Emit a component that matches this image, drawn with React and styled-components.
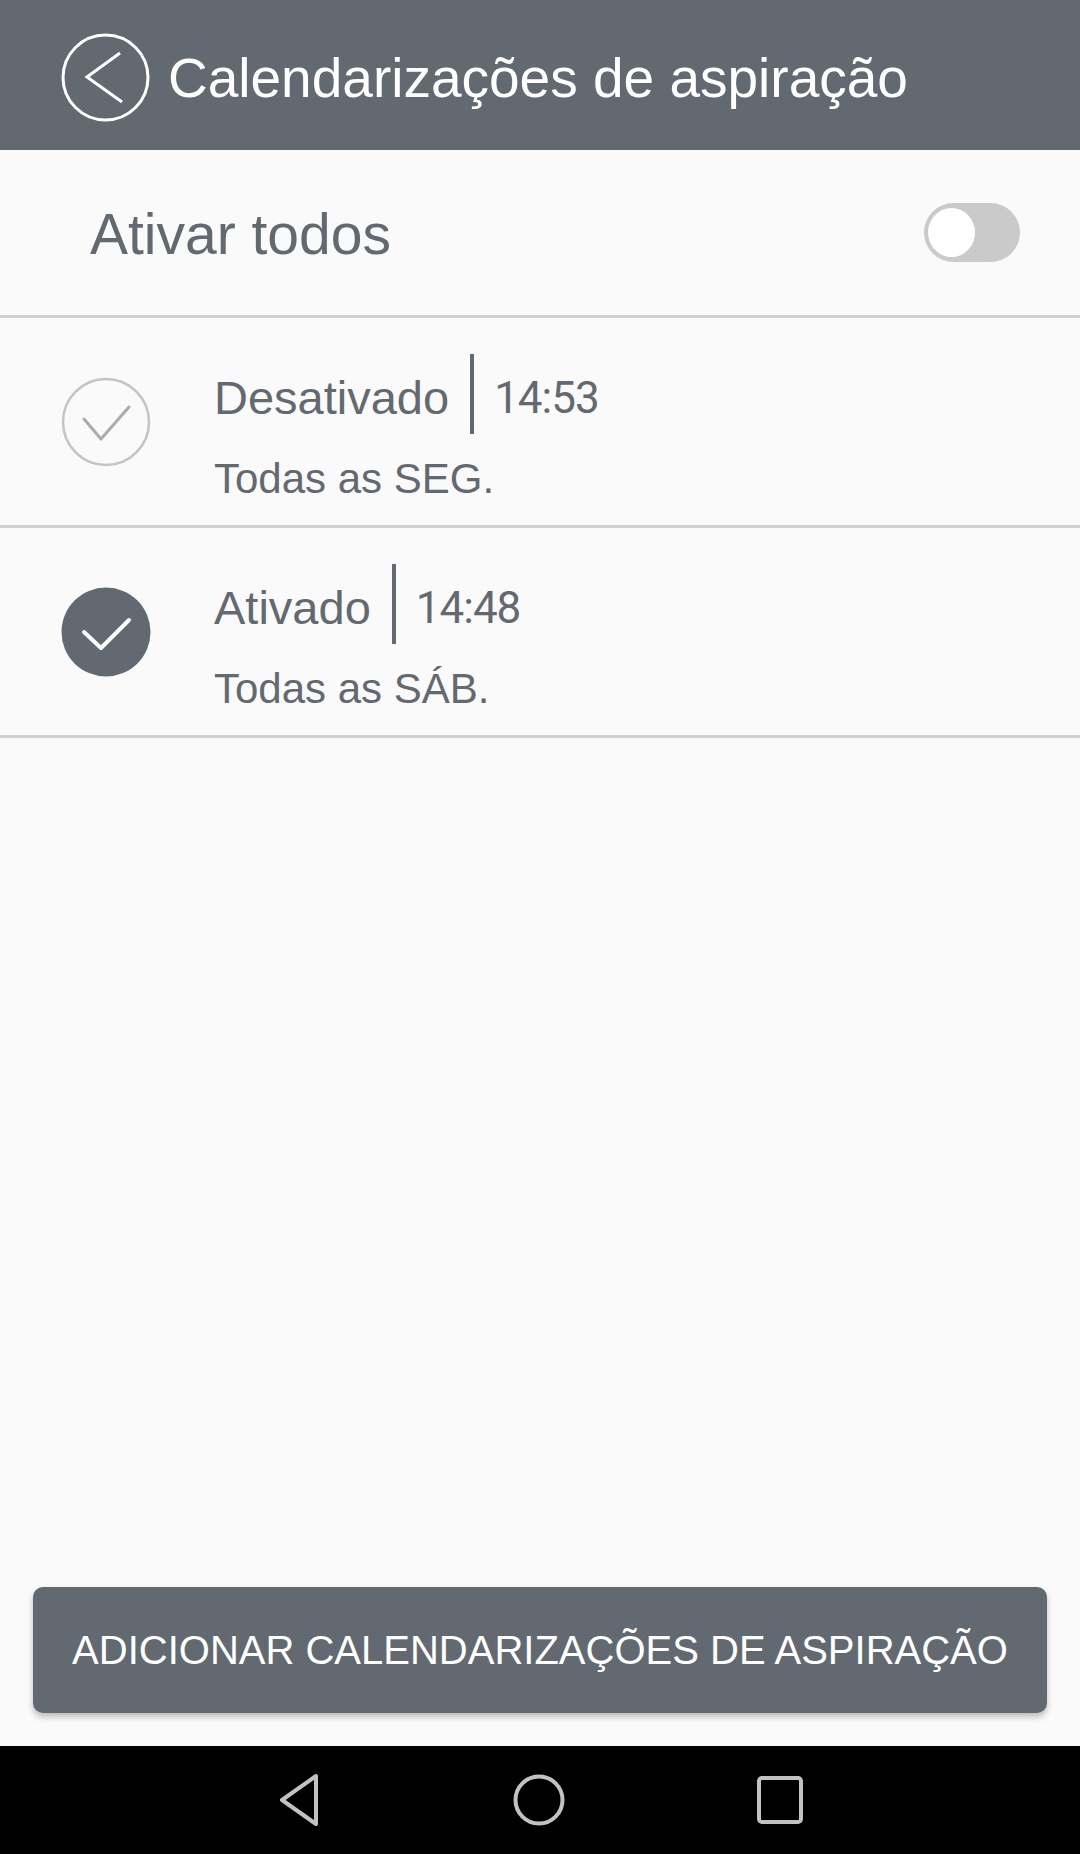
import React, { useState } from "react";
import styled, { createGlobalStyle } from "styled-components";

const GlobalStyle = createGlobalStyle`
  html, body {
    margin: 0;
    padding: 0;
    background: #fafafa;
    font-family: "Liberation Sans", Arial, sans-serif;
  }
`;

const schedules = [
  { id: 1, on: false, time: "14:53", days: "Todas as SEG." },
  { id: 2, on: true, time: "14:48", days: "Todas as SÁB." },
];

export default function App() {
  const [allOn, setAllOn] = useState(false);

  return (
    <>
      <GlobalStyle />
      <Screen>
        <Header>
          <BackButton aria-label="Voltar">
            <svg width="89" height="89" viewBox="0 0 89 89">
              <circle cx="44.5" cy="44.5" r="42.5" fill="none" stroke="#fff" strokeWidth="3" />
              <polyline points="59,20 26,44 61,69" fill="none" stroke="#fff" strokeWidth="3" />
            </svg>
          </BackButton>
          <Title>Calendarizações de aspiração</Title>
        </Header>

        <ToggleRow>
          <ToggleLabel>Ativar todos</ToggleLabel>
          <Switch $on={allOn} onClick={() => setAllOn(!allOn)}>
            <Knob $on={allOn} />
          </Switch>
        </ToggleRow>

        {schedules.map((s) => (
          <Row key={s.id}>
            <CheckCircle $on={s.on} />
            <TextBlock>
              <LabelLine>
                <Label>{s.on ? "Ativado" : "Desativado"}</Label>
                <Bar />
                <Time>{s.time}</Time>
              </LabelLine>
              <Days>{s.days}</Days>
            </TextBlock>
          </Row>
        ))}

        <Spacer />

        <Footer>
          <AddButton>Adicionar calendarizações de aspiração</AddButton>
        </Footer>

        <NavBar>
          <svg width="46" height="54" viewBox="0 0 46 54">
            <path d="M40 3 L6 27 L40 51 Z" fill="none" stroke="#c2c2c2" strokeWidth="4" strokeLinejoin="round" />
          </svg>
          <svg width="54" height="54" viewBox="0 0 54 54">
            <circle cx="27" cy="27" r="23.5" fill="none" stroke="#c2c2c2" strokeWidth="4" />
          </svg>
          <svg width="48" height="50" viewBox="0 0 48 50">
            <rect x="3" y="3" width="42" height="44" rx="3" fill="none" stroke="#c2c2c2" strokeWidth="4" />
          </svg>
        </NavBar>
      </Screen>
    </>
  );
}

const CheckCircle = ({ $on }) => (
  <CheckWrap>
    <svg width="90" height="90" viewBox="0 0 90 90">
      {$on ? (
        <circle cx="45" cy="45" r="44.5" fill="#636970" />
      ) : (
        <circle cx="45" cy="45" r="43" fill="none" stroke="#c4c4c4" strokeWidth="2.5" />
      )}
      <polyline
        points={$on ? "23,45 40,61 68,33" : "23,42 40,62 68,30"}
        fill="none"
        stroke={$on ? "#fff" : "#acacac"}
        strokeWidth={$on ? 4 : 3}
        strokeLinecap="round"
        strokeLinejoin="round"
      />
    </svg>
  </CheckWrap>
);

const Screen = styled.div`
  width: 1080px;
  min-height: 1854px;
  display: flex;
  flex-direction: column;
  background: #fafafa;
`;

const Header = styled.header`
  height: 150px;
  background: #636970;
  display: flex;
  align-items: center;
  padding-left: 61px;
  box-sizing: border-box;
  gap: 18px;
`;

const BackButton = styled.div`
  width: 89px;
  height: 89px;
  display: flex;
  margin-top: 5px;
`;

const Title = styled.h1`
  margin: 0;
  margin-top: 6px;
  color: #fff;
  font-weight: 400;
  font-size: 55px;
`;

const ToggleRow = styled.div`
  height: 165px;
  display: flex;
  align-items: center;
  justify-content: space-between;
  padding: 0 60px 0 90px;
  border-bottom: 3px solid #d0d0d0;
`;

const ToggleLabel = styled.span`
  color: #636970;
  font-size: 57px;
  margin-top: 2px;
`;

const Switch = styled.div`
  width: 96px;
  height: 59px;
  border-radius: 30px;
  background: ${(p) => (p.$on ? "#636970" : "#cacaca")};
  display: flex;
  align-items: center;
  justify-content: ${(p) => (p.$on ? "flex-end" : "flex-start")};
  padding: 0 4px;
  box-sizing: border-box;
  cursor: pointer;
`;

const Knob = styled.div`
  width: 47px;
  height: 49px;
  border-radius: 50%;
  background: #fff;
`;

const Row = styled.div`
  height: 207px;
  display: flex;
  align-items: center;
  padding-left: 61px;
  gap: 63px;
  border-bottom: 3px solid #d0d0d0;
`;

const CheckWrap = styled.div`
  width: 90px;
  height: 90px;
  display: flex;
`;

const TextBlock = styled.div`
  display: flex;
  flex-direction: column;
  padding-top: 14px;
  color: #636970;
`;

const LabelLine = styled.div`
  height: 80px;
  display: flex;
  align-items: center;
`;

const Label = styled.span`
  font-size: 47px;
  padding-top: 8px;
`;

const Bar = styled.div`
  width: 4px;
  height: 80px;
  background: #636970;
  margin: 0 20px 0 21px;
`;

const Time = styled.span`
  font-family: Roboto, "Liberation Sans", sans-serif;
  font-size: 44px;
  letter-spacing: -1px;
  padding-top: 8px;
`;

const Days = styled.div`
  font-size: 42px;
  line-height: 50px;
  margin-top: 20px;
`;

const Spacer = styled.div`
  flex: 1;
`;

const Footer = styled.div`
  padding: 0 33px 33px;
`;

const AddButton = styled.button`
  width: 100%;
  height: 126px;
  border: none;
  border-radius: 10px;
  background: #636970;
  color: #fff;
  font-family: "Liberation Sans", Arial, sans-serif;
  font-size: 40px;
  text-transform: uppercase;
  box-shadow: 0 4px 6px rgba(0, 0, 0, 0.25);
  padding: 0;
`;

const NavBar = styled.nav`
  height: 108px;
  background: #000;
  display: flex;
  align-items: center;
  justify-content: center;
  & > svg:nth-child(1) { margin-right: 190px; }
  & > svg:nth-child(2) { margin-right: 190px; }
`;
